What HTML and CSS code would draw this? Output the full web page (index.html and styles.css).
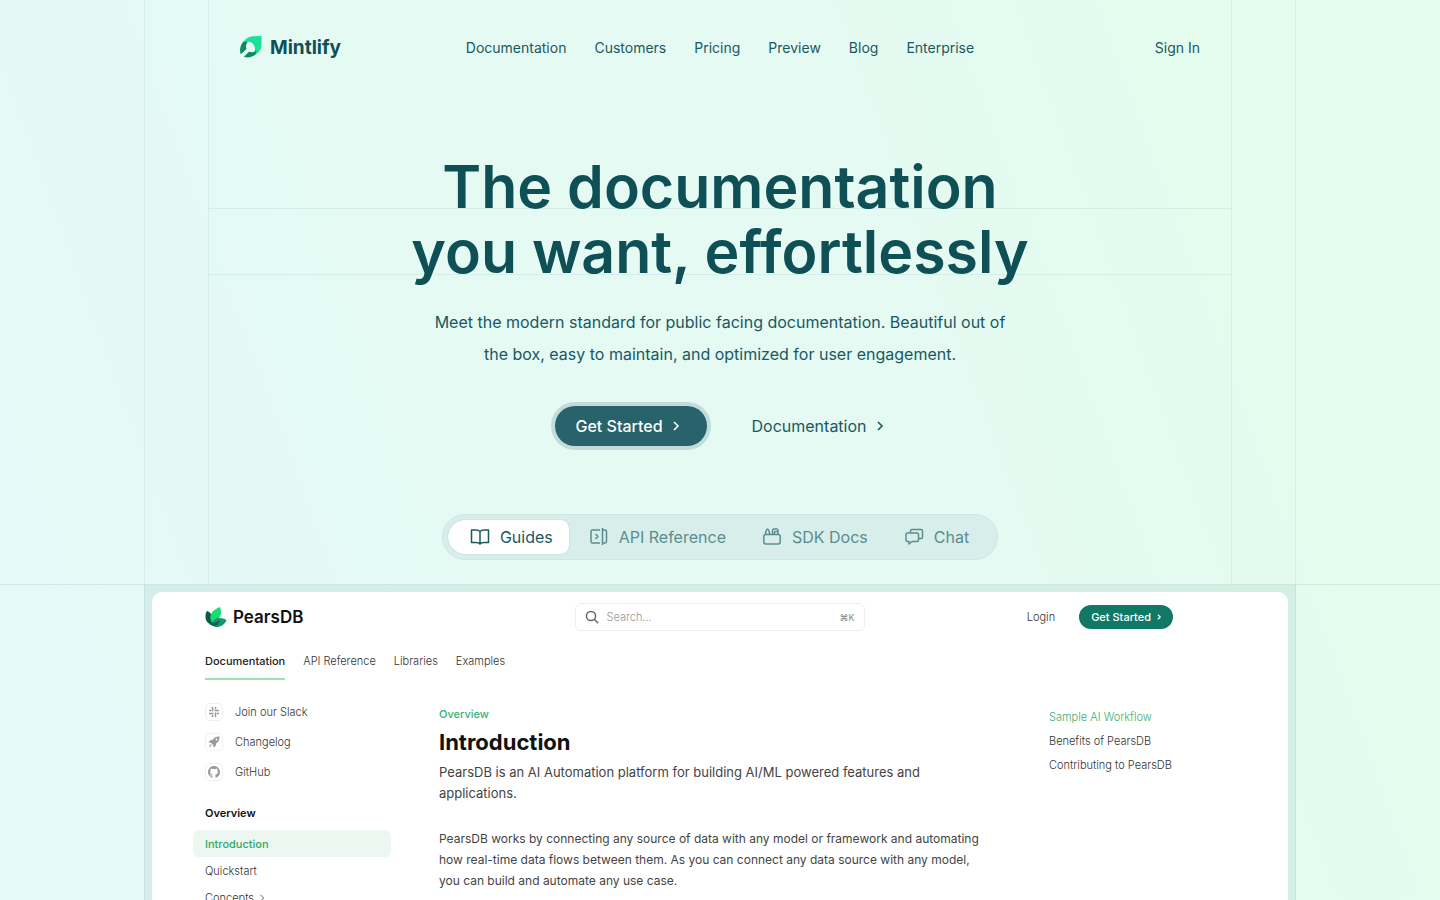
FILE: index.html
```html
<!DOCTYPE html>
<html lang="en">
<head>
<meta charset="utf-8">
<title>Mintlify</title>
<link rel="stylesheet" href="styles.css">
</head>
<body>
<div class="page">
  <div class="hero">
    <header class="header">
      <a class="brand" href="#">
        <svg width="22" height="22" viewBox="0 0 22 22" aria-hidden="true">
          <path d="M3 6.200C5.800 2.200 9 .3 13.500.2L21.500 0V8.500c0 4.500-2 8-6.200 10.300L14.800 14c1.200-4-3-9-7.300-8.300Z" fill="#18e299"/>
          <path d="M3.300 5.800C.2 9.500-.8 14 .8 18.200L6.500 13C5.600 10.500 6 7.900 8 5.800Z" fill="#0c8c5e"/>
          <path d="M3.800 20.700c4.200 1.600 8.500.7 11.800-2.400l.8-4c-1.900 1.800-4.900 2.300-7.400 1.400Z" fill="#0c8c5e"/>
          <path d="M1.200 20.600 7.500 14.500" stroke="#e4faf5" stroke-width="1.200"/>
        </svg>
        <span>Mintlify</span>
      </a>
      <nav class="nav">
        <a href="#">Documentation</a><a href="#">Customers</a><a href="#">Pricing</a><a href="#">Preview</a><a href="#">Blog</a><a href="#">Enterprise</a>
      </nav>
      <a class="signin" href="#">Sign In</a>
    </header>
    <div class="rules" aria-hidden="true"></div>
    <h1 class="title">The documentation<br>you want, effortlessly</h1>
    <p class="lead">Meet the modern standard for public facing documentation. Beautiful out of<br>the box, easy to maintain, and optimized for user engagement.</p>
    <div class="actions">
      <button class="cta" type="button">Get Started <svg class="chev" viewBox="0 0 10 10"><path d="M3 1l4 4-4 4"/></svg></button>
      <a class="doclink" href="#">Documentation <svg class="chev" viewBox="0 0 10 10"><path d="M3 1l4 4-4 4"/></svg></a>
    </div>
    <div class="tabs">
      <button class="tab tab-on" type="button"><svg viewBox="0 0 20 20"><path d="M10 4.500C9 3.300 7.500 3 6 3H1.500v12.500H6c1.800 0 3.200.3 4 1.500.8-1.200 2.200-1.500 4-1.500h4.500V3H14c-1.500 0-3 .3-4 1.500ZM10 4.500V17"/></svg>Guides</button>
      <button class="tab" type="button"><svg viewBox="0 0 20 20"><path d="M11 3H3.500a1.500 1.500 0 0 0-1.500 1.500v10A1.500 1.500 0 0 0 3.500 16H11M6.500 7l2.500 2.500L6.500 12M13.500 1v17M13.500 3H16a1.500 1.500 0 0 1 1.500 1.500v10A1.500 1.500 0 0 1 16 16h-2.500"/></svg>API Reference</button>
      <button class="tab" type="button"><svg viewBox="0 0 20 20"><rect x="1.800" y="7.500" width="16.400" height="9.500" rx="2"/><path d="M3.500 7.500 4 4.200Q5.500 0 7 4.200L7.800 7.500M10.500 7.500V3.500a1.500 1.500 0 0 1 1.500-1.500H14.500a1.500 1.500 0 0 1 1.500 1.500V7.500M12.500 4.500H16M12.500 4.500v3"/></svg>SDK Docs</button>
      <button class="tab" type="button"><svg viewBox="0 0 20 20"><path d="M6.500 6V4A1.500 1.500 0 0 1 8 2.500h9A1.500 1.500 0 0 1 18.500 4v6a1.500 1.500 0 0 1-1.500 1.500h-2.500"/><path d="M3.500 6H13a1.500 1.500 0 0 1 1.500 1.500v5.500a1.500 1.500 0 0 1-1.500 1.500H8L5 17v-2.500H3.500A1.500 1.500 0 0 1 2 13V7.500A1.500 1.500 0 0 1 3.500 6Z"/></svg>Chat</button>
    </div>
  </div>
  <div class="stage">
    <div class="frame">
      <div class="window">
        <div class="docbar">
          <a class="pears" href="#">
            <svg width="22" height="20" viewBox="0 0 22 20" aria-hidden="true">
              <path d="M2 4c2.500.6 4.500 3 5 6l1 8C3 17.500 0 13.500.5 8.500.7 6.500 1.200 5 2 4Z" fill="#0b5c3c"/>
              <path d="M15 0c1.500 4 1.500 8-1 11l-6 6C5 13 4.500 9 7 5.500 8.900 3 12 1 15 0Z" fill="#16dc74"/>
              <path d="M7 18c0-4 3-7 7.500-7 2.500 0 5.500.8 7 2.200C19.500 17.500 16 20 11.500 20 10 20 8.600 19.500 7 18Z" fill="#14966a"/>
              <path d="M3.500 15.500c4 .6 7.500.3 11.500-2.500-1 4-3 6.500-6.500 6-2-.3-3.800-1.500-5-3.500Z" fill="#15605c"/>
            </svg>
            <span>PearsDB</span>
          </a>
          <label class="search">
            <svg viewBox="0 0 14 14"><circle cx="6" cy="6" r="4.600"/><path d="m9.300 9.300 3.900 3.900"/></svg>
            <input type="text" placeholder="Search..." aria-label="Search">
            <kbd>⌘K</kbd>
          </label>
          <div class="docuser">
            <a href="#">Login</a>
            <button class="minicta" type="button">Get Started <svg class="chev" viewBox="0 0 10 10"><path d="M3.500 2l3 3-3 3"/></svg></button>
          </div>
        </div>
        <nav class="doctabs"><a class="on" href="#">Documentation</a><a href="#">API Reference</a><a href="#">Libraries</a><a href="#">Examples</a></nav>
        <div class="docbody">
          <aside class="side">
            <a class="ext" href="#"><i><svg viewBox="0 0 12 12"><path d="M4.500 1v4.500M7.500 6.500v4.500M1 7.500h4.500M6.500 4.500h4.500M7.500 1v2.200M4.500 8.800v2.200M1 4.500h2.200M8.800 7.500h2.200" fill="none" stroke="#999" stroke-width="1.500"/></svg></i>Join our Slack</a>
            <a class="ext" href="#"><i><svg viewBox="0 0 12 12"><path d="M11.500.5C8 .3 6 1.500 4.500 4L2 4.300.5 6.500l2.500.2L5.300 9l.2 2.500L7.700 10 8 7.500c2.500-1.500 3.700-3.500 3.500-7Z" fill="#999"/><circle cx="8.500" cy="3.500" r="1" fill="#fff"/><path d="M3 8c-1.500.2-2 1.500-2.300 3.300C2.500 11 3.800 10.500 4 9Z" fill="#c4c4c4"/></svg></i>Changelog</a>
            <a class="ext" href="#"><i><svg viewBox="0 0 16 16"><path fill="#999" d="M8 0C3.580 0 0 3.580 0 8c0 3.540 2.290 6.530 5.470 7.590.4.070.550-.170.550-.380 0-.190-.010-.820-.010-1.490-2.010.370-2.530-.490-2.690-.940-.090-.230-.480-.940-.820-1.130-.280-.150-.680-.520-.010-.530.630-.010 1.080.580 1.230.820.720 1.210 1.870.870 2.330.660.070-.520.280-.870.510-1.070-1.780-.200-3.640-.890-3.640-3.950 0-.870.310-1.590.820-2.150-.080-.200-.360-1.020.080-2.120 0 0 .670-.210 2.200.820a7.640 7.640 0 0 1 4 0c1.530-1.040 2.200-.820 2.200-.820.440 1.100.160 1.920.080 2.120.510.560.820 1.270.820 2.150 0 3.070-1.870 3.750-3.650 3.950.290.250.540.730.540 1.480 0 1.070-.010 1.930-.010 2.200 0 .210.150.460.550.380A8.010 8.010 0 0 0 16 8c0-4.420-3.580-8-8-8Z"/></svg></i>GitHub</a>
            <h2 class="group">Overview</h2>
            <a class="item item-on" href="#">Introduction</a>
            <a class="item" href="#">Quickstart</a>
            <a class="item" href="#">Concepts <svg class="chev" viewBox="0 0 10 10"><path d="M3 1l4 4-4 4"/></svg></a>
          </aside>
          <article class="article">
            <p class="eyebrow">Overview</p>
            <h2>Introduction</h2>
            <p class="intro">PearsDB is an AI Automation platform for building AI/ML powered features and applications.</p>
            <p class="para">PearsDB works by connecting any source of data with any model or framework and automating how real-time data flows between them. As you can connect any data source with any model, you can build and automate any use case.</p>
          </article>
          <nav class="toc"><a class="on" href="#">Sample AI Workflow</a><a href="#">Benefits of PearsDB</a><a href="#">Contributing to PearsDB</a></nav>
        </div>
      </div>
    </div>
  </div>
</div>
</body>
</html>
```
FILE: styles.css
```css
*, *::before { box-sizing: border-box; }
body { margin: 0; font-family: Inter, "Liberation Sans", sans-serif; font-weight: 400; color: #1a585f; }
a { color: inherit; text-decoration: none; }
button { font: inherit; color: inherit; border: 0; background: none; cursor: pointer; }
svg { flex: none; }
h1, h2, p { margin: 0; }
.page {
  position: relative;
  display: flex;
  flex-direction: column;
  height: 100vh;
  overflow: hidden;
  background: linear-gradient(70deg, #e6f9fa 0%, #e4faf4 30%, #e4faf2 65%, #e3fded 90%);
}
.page::before {
  content: "";
  position: absolute;
  inset: 0;
  width: 80%;
  margin: 0 auto;
  border: solid rgba(15, 80, 87, .07);
  border-width: 0 1px;
}
.hero {
  position: relative;
  width: 100%;
  max-width: 1024px;
  margin: 0 auto;
  border: solid rgba(15, 80, 87, .07);
  border-width: 0 1px;
  display: flex;
  flex-direction: column;
  align-items: center;
  padding-bottom: 24px;
}
.header {
  align-self: stretch;
  display: grid;
  grid-template-columns: 1fr auto 1fr;
  align-items: center;
  padding: 0 31px;
  height: 94px;
  font-size: 14px;
}
.brand { display: flex; align-items: center; gap: 8px; color: #0f5057; font-size: 19px; font-weight: 700; }
.nav { display: flex; gap: 28px; }
.signin { justify-self: end; }
.rules {
  position: absolute;
  top: 208px;
  left: 0;
  right: 0;
  height: 67px;
  border: solid rgba(15, 80, 87, .07);
  border-width: 1px 0;
}
.title {
  position: relative;
  margin-top: 60px;
  color: #0f5057;
  font-size: 59px;
  line-height: 65px;
  font-weight: 600;
  text-align: center;
}
.lead { margin-top: 22px; font-size: 16px; line-height: 32px; text-align: center; }
.actions { display: flex; align-items: center; gap: 45px; margin-top: 36px; }
.cta {
  display: flex;
  align-items: center;
  gap: 8px;
  height: 40px;
  padding: 0 26px 0 20px;
  border-radius: 20px;
  background: #28626a;
  color: #fff;
  font-size: 16px;
  font-weight: 500;
  box-shadow: 0 0 0 4px #c0dcdc;
}
.doclink { display: flex; align-items: center; gap: 8px; font-size: 16px; }
.chev { width: 10px; height: 10px; fill: none; stroke: currentColor; stroke-width: 1.600; }
.tabs {
  display: flex;
  gap: 4px;
  margin-top: 68px;
  padding: 5px 12px 5px 5px;
  border: 1px solid #cfe7e3;
  border-radius: 23px;
  background: #d8eeea;
  font-size: 16px;
}
.tab { display: flex; align-items: center; gap: 10px; height: 34px; padding: 0 16px; color: #5b8d90; }
.tab svg { width: 20px; height: 20px; fill: none; stroke: currentColor; stroke-width: 1.500; stroke-linejoin: round; }
.tab-on { padding-left: 22px; border-radius: 17px 8px 8px 17px; background: #fff; color: #1a585f; box-shadow: 0 0 1px rgba(15, 80, 87, .4); }
.stage { position: relative; flex: 1; min-height: 0; border-top: 1px solid rgba(15, 80, 87, .1); }
.frame {
  width: 80%;
  height: 100%;
  margin: 0 auto;
  padding: 7px 8px 0;
  background: rgba(15, 80, 87, .07);
}
.window {
  height: 100%;
  padding: 11px 54px 0 53px;
  border-radius: 10px 10px 0 0;
  background: #fff;
  color: #333;
  font-size: 11px;
  font-weight: 300;
  overflow: hidden;
}
.docbar { display: grid; grid-template-columns: 1fr 290px 1fr; align-items: center; }
.pears { display: flex; align-items: center; gap: 6px; color: #111; font-size: 17px; font-weight: 600; }
.search { display: flex; align-items: center; gap: 8px; height: 28px; padding: 0 9px; border: 1px solid #eee; border-radius: 6px; }
.search svg { width: 14px; height: 14px; fill: none; stroke: #666; stroke-width: 1.500; }
.search input { flex: 1; min-width: 0; border: 0; padding: 0; outline: 0; font: inherit; }
.search input::placeholder { color: #999; }
.search kbd { font: inherit; font-size: 9px; font-weight: 400; color: #888; }
.docuser { display: flex; align-items: center; justify-content: flex-end; gap: 24px; padding-right: 61px; }
.minicta { display: flex; align-items: center; gap: 4px; height: 24px; padding: 0 10px 0 12px; border-radius: 12px; background: #117866; color: #fff; font-weight: 500; }
.minicta .chev, .item .chev { width: 8px; height: 8px; }
.item .chev { stroke-width: 1; }
.doctabs { display: flex; gap: 18px; margin-top: 20px; }
.doctabs a { height: 29px; line-height: 20px; }
.doctabs .on { color: #222; font-weight: 500; border-bottom: 2px solid #a2dcb8; }
.docbody { display: grid; grid-template-columns: 186px 1fr 185px; margin-top: 22px; }
.side { display: flex; flex-direction: column; }
.ext { display: flex; align-items: center; gap: 12px; height: 20px; margin-bottom: 10px; }
.ext i { display: grid; place-items: center; width: 18px; height: 18px; border: 1px solid #f0f0f0; border-radius: 5px; }
.ext svg { width: 12px; height: 12px; }
.group { margin: 11px 0 7px; font-size: 11px; line-height: 20px; font-weight: 600; color: #111; }
.item { display: flex; align-items: center; gap: 4px; height: 27px; margin-left: -12px; padding-left: 12px; }
.item-on { border-radius: 6px; background: #edf7f1; color: #2eaa6a; font-weight: 500; }
.article { padding: 3px 60px 0 48px; color: #444; font-weight: 400; }
.eyebrow { line-height: 18px; font-weight: 500; color: #3aaf72; }
.article h2 { margin-top: 4px; font-size: 22px; line-height: 30px; font-weight: 700; color: #111; }
.intro { margin-top: 5px; font-size: 13px; line-height: 21px; }
.para { margin-top: 24px; font-size: 12px; line-height: 21px; }
.toc { display: flex; flex-direction: column; gap: 4px; padding-top: 5px; white-space: nowrap; }
.toc a { line-height: 20px; }
.toc .on { color: #3aaf72; }
```
